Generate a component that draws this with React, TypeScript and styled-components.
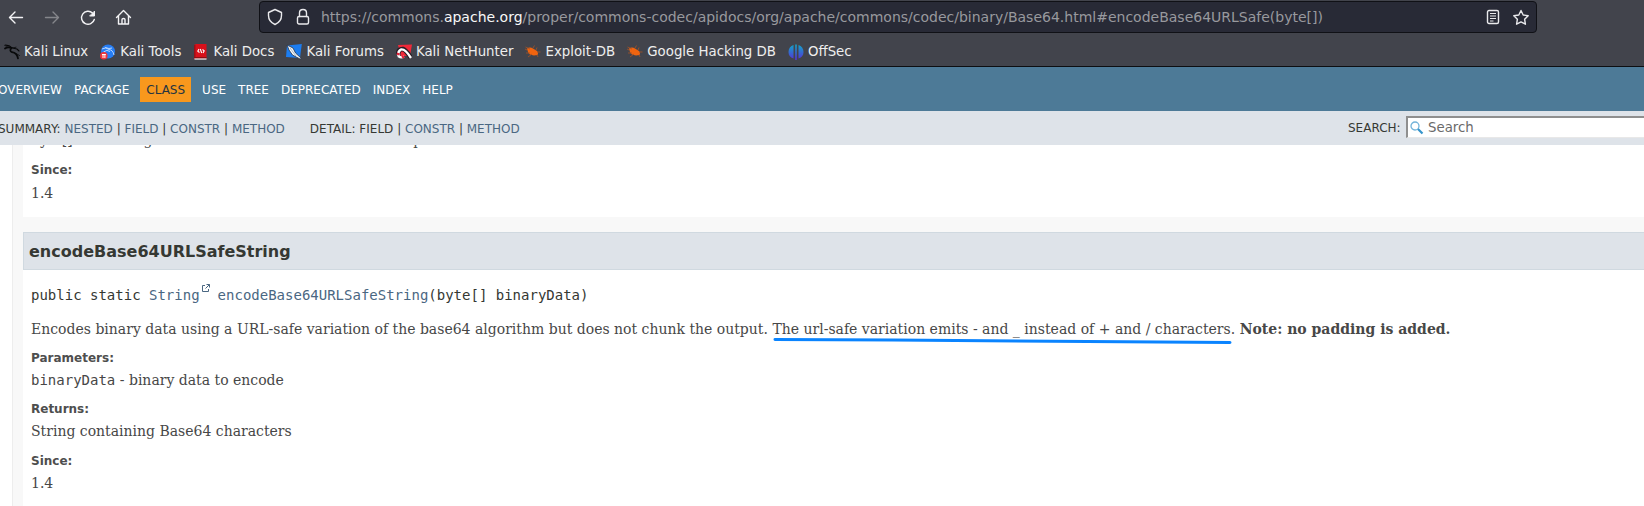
import React from "react";
import styled, { createGlobalStyle } from "styled-components";

const GlobalStyle = createGlobalStyle`
  * { box-sizing: border-box; }
  body {
    margin: 0;
    overflow: hidden;
    background: #ffffff;
    color: #353833;
    font-family: "DejaVu Sans", Arial, Helvetica, sans-serif;
    font-size: 14px;
  }
`;

const Window = styled.div`
  height: 506px;
  overflow: hidden;
  display: flex;
  flex-direction: column;
  white-space: nowrap;
`;

/* Browser chrome */
const Chrome = styled.header`
  flex: none;
  height: 67px;
  background: #42444c;
  border-bottom: 1px solid #0d0e11;
  color: #eeeeee;
`;

const Toolbar = styled.div`
  display: flex;
  align-items: flex-start;
  height: 34px;
  padding: 1px 0 0 6px;
`;

const ToolButtons = styled.div`
  display: flex;
  gap: 16px;
  width: 253px;
  padding-top: 6px;
`;

const ToolButton = styled.span<{ $dim?: boolean }>`
  display: flex;
  width: 20px;
  height: 20px;
  color: ${(p) => (p.$dim ? "#85868b" : "#f3f3f5")};
`;

const UrlBar = styled.div`
  display: flex;
  align-items: center;
  width: 1278px;
  height: 32px;
  padding: 0 6px 0 7px;
  background: #282a36;
  border: 1px solid #101116;
  border-radius: 4px;
`;

const UrlIcon = styled.span<{ $gap?: number }>`
  display: flex;
  margin-right: ${(p) => p.$gap ?? 0}px;
  color: #e9e9ec;
`;

const Url = styled.span`
  flex: 1;
  color: #98999e;
  font-size: 14px;
  line-height: 20px;
`;

const Host = styled.span`
  color: #f8f8f8;
`;

const Bookmarks = styled.nav`
  display: flex;
  gap: 12px;
  padding: 9px 0 0 4px;
`;

const Bookmark = styled.span`
  display: flex;
  align-items: center;
  gap: 4px;
  height: 18px;
  font-size: 13.333px;
  line-height: 18px;
`;

/* Documentation navigation */
const TopNav = styled.nav`
  flex: none;
  height: 44px;
  padding-top: 10px;
  background: #4d7a97;
  color: #ffffff;
  font-size: 12px;
`;

const NavItem = styled.span<{ $active?: boolean }>`
  height: 25px;
  line-height: 27px;
  padding: 0 6px;
  ${(p) => p.$active && "background: #f8981d; color: #253441; margin: 0 5px;"}
`;

const NavList = styled.div`
  display: flex;
  margin-left: -8px;
`;

const SubNav = styled.div`
  flex: none;
  display: flex;
  justify-content: space-between;
  height: 34px;
  background: #dee3e9;
  font-size: 12px;
  line-height: 36px;
`;

const SubLists = styled.div`
  display: flex;
  gap: 25px;
  margin-left: -2px;
`;

const Link = styled.a`
  color: #4a6782;
`;

const SearchArea = styled.div`
  display: flex;
  width: 296px;
  line-height: 34px;
`;

const SearchLabel = styled.label`
  width: 58px;
`;

const SearchBox = styled.div`
  display: flex;
  align-items: center;
  flex: 1;
  gap: 4px;
  height: 22px;
  margin-top: 5px;
  padding-left: 2px;
  background: #ffffff;
  border: 2px solid #8f8f8f;
  border-bottom: 1px solid #e8e8e8;
  border-right: 0;
  color: #6a6a6a;
  font-size: 13.333px;
`;

/* Documentation body */
const Main = styled.main`
  flex: 1;
  min-height: 0;
  display: flex;
  flex-direction: column;
  overflow: hidden;
  margin-left: 12px;
  padding-left: 10px;
  border-left: 1px solid #ededed;
  background: #f8f8f8;
`;

const Section = styled.section<{ $previous?: boolean }>`
  flex: none;
  overflow: hidden;
  background: #ffffff;
  ${(p) => (p.$previous ? "height: 72px; margin-bottom: 15px;" : "height: 290px;")}
`;

const MethodTitle = styled.h3`
  height: 38px;
  margin: 0;
  padding-left: 5px;
  background: #dee3e9;
  border: 1px solid #d0d9e0;
  border-right: 0;
  font-size: 16px;
  line-height: 38px;
`;

const Details = styled.div<{ $lift?: number }>`
  padding-left: 8px;
  margin-top: ${(p) => p.$lift ?? 0}px;
`;

const Signature = styled.div`
  margin-top: 15px;
  height: 20px;
  line-height: 20px;
  font-family: "DejaVu Sans Mono", monospace;
  font-size: 14px;
`;

const ExternalMark = styled.svg`
  margin: -1px 8px 0 2px;
  vertical-align: 8px;
`;

const Block = styled.p`
  margin: 14px 0 0;
  height: 20px;
  line-height: 20px;
  color: #474747;
  font-family: "DejaVu Serif", Georgia, serif;
  font-size: 14px;
`;

const Underlined = styled.span`
  position: relative;
`;

const Stroke = styled.svg`
  position: absolute;
  left: 1px;
  top: 15px;
`;

const Notes = styled.dl`
  margin: 9px 0 0;
`;

const Term = styled.dt<{ $height?: number }>`
  height: ${(p) => p.$height ?? 18}px;
  line-height: 20px;
  color: #4e4e4e;
  font-size: 12px;
  font-weight: bold;
`;

const Desc = styled.dd<{ $after?: number }>`
  margin: 4px 0 ${(p) => p.$after ?? 10.4}px;
  height: 19px;
  line-height: 20px;
  color: #474747;
  font-family: "DejaVu Serif", Georgia, serif;
  font-size: 14px;
`;

const Code = styled.code`
  font-family: "DejaVu Sans Mono", monospace;
  font-size: 14px;
`;

const line = { fill: "none", stroke: "currentColor", strokeWidth: 1.4, strokeLinecap: "round", strokeLinejoin: "round" } as const;

const Back = () => (
  <svg width="20" height="20" {...line}><path d="M16.500 10.500H3.500M9 5L3.500 10.500L9 16" /></svg>
);
const Forward = () => (
  <svg width="20" height="20" {...line}><path d="M3.500 10.500H16.500M11 5L16.500 10.500L11 16" /></svg>
);
const Reload = () => (
  <svg width="20" height="20" {...line}><path d="M14.500 6A6.500 6.500 0 1 0 16.300 12.500" /><path d="M16.500 4.500V9H12Z" fill="currentColor" strokeWidth="1" /></svg>
);
const Home = () => (
  <svg width="20" height="20" {...line}><path d="M2.500 10.500L9.500 3.500L16.500 10.500M4.500 8.800V17H14.500V8.800M8 17V12.500Q8 11.500 9.500 11.500Q11 11.500 11 12.500V17" /></svg>
);
const Shield = () => (
  <svg width="16" height="18" {...line}><path d="M8 1.500L14.500 4.500V7.500C14.500 12 11.500 15 8 16.500C4.500 15 1.500 12 1.500 7.500V4.500Z" /></svg>
);
const Lock = () => (
  <svg width="14" height="18" {...line}><rect x="1.500" y="8.500" width="11" height="7.500" rx="1.500" /><path d="M3.500 8.500V5Q3.500 1.500 7 1.500Q10.500 1.500 10.500 5V8.500" /></svg>
);
const Reader = () => (
  <svg width="14" height="16" {...line}><rect x="1.500" y="1.500" width="11" height="13" rx="1.500" /><path d="M4 4.500H10M4 7H10M4 9.500H10M4 12H7.500" strokeWidth="1.100" strokeLinecap="butt" /></svg>
);
const Star = () => (
  <svg width="18" height="17" {...line}><path d="M9 1.500L11.200 6L16.200 6.700L12.600 10.200L13.400 15.200L9 12.900L4.600 15.200L5.400 10.200L1.800 6.700L6.800 6Z" /></svg>
);

const KaliDragon = () => (
  <svg width="16" height="16" viewBox="0 0 16 16" fill="none" stroke="#08090a" strokeLinecap="round">
    <path d="M.8 1.200Q5 .8 8 3.800Q11 4.500 13 5L15 7" strokeWidth="1.100" />
    <path d="M1 4.500Q4 2.500 7.500 4Q5 7 8 8.200Q13 9 14 14.500" strokeWidth="1.700" />
    <path d="M2 2.800L7 3.500M9 4L12 3.200M12 9.500L15.500 11.500" strokeWidth=".8" />
  </svg>
);
const KaliTools = () => (
  <svg width="16" height="16" viewBox="0 0 16 16">
    <circle cx="8" cy="7.500" r="7" fill="#267df4" />
    <path d="M2 5Q6 2.500 9 5.500Q13 6 14 11M3.500 8Q7 5 10 7.500M5 3.500L9 4.500L12 4" fill="none" stroke="#b6d6ff" strokeWidth="1" />
    <circle cx="3.800" cy="11.800" r="3.800" fill="#ef343b" />
    <path d="M2 10.500H5.800M3 10.500V14M4.900 10.500V14" stroke="#fff" fill="none" />
  </svg>
);
const KaliDocs = () => (
  <svg width="16" height="16" viewBox="0 0 16 16">
    <path d="M1 1L3 0H13.500V15H1Z" fill="#d8101a" />
    <path d="M1 1H2.500V14H1Z" fill="#991017" />
    <path d="M1.500 14.200H13.500V15.700H1.500Z" fill="#dedede" />
    <path d="M1.500 13.700H13.500" stroke="#7b1115" />
    <path d="M6 5L4.800 7.200L6.500 8.500M9.500 5.500L11.200 6.800L10 9M7.300 5L8.700 9" fill="none" stroke="#fff" strokeWidth="1.100" />
  </svg>
);
const KaliForums = () => (
  <svg width="16" height="16" viewBox="0 0 16 16">
    <path d="M1 1.500L15.800 0L14 14L0 13Z" fill="#1c7df1" />
    <path d="M1 1L7 4L9.500 9L15.500 14.500L14 15L6.500 11L3 6Z" fill="#f5f7fa" stroke="#263448" strokeWidth=".8" />
    <path d="M4 4L10 12" stroke="#8b9cac" strokeWidth=".7" />
  </svg>
);
const KaliNetHunter = () => (
  <svg width="16" height="16" viewBox="0 0 16 16">
    <path d="M2 1L16 .5L14 12L5 12Z" fill="#f02939" />
    <path d="M2 10Q2.500 4.500 7 5Q10 6 15 14" fill="none" stroke="#271c24" strokeWidth="4.600" />
    <path d="M3 13Q.8 8 5 5.500Q9 4.500 15 14M3 12.500Q5 14 8 12.500" fill="none" stroke="#fff" strokeWidth="2.400" />
    <path d="M.8 9.500L3.500 10.500M6 12L8 14" stroke="#e31d36" strokeWidth="2.200" />
  </svg>
);
const ExploitBug = () => (
  <svg width="16" height="16" viewBox="0 0 16 16">
    <path d="M2 4.500Q5 2.500 8 4.500L12 7Q14 9 12.500 11L9 11.500Q4 11 3 8Z" fill="#f0640f" />
    <path d="M.5 3L5 5M8 4L9.500 1.500M11 6L12 3.500M1 9H5M3 13L7 10M12 11L13 13M12 8H15.500M2 6L0 5" fill="none" stroke="#a85324" strokeWidth=".8" />
  </svg>
);
const OffSec = () => (
  <svg width="16" height="16" viewBox="0 0 16 16">
    <defs><linearGradient id="offsec" x1="0" y1="0" x2="0" y2="1"><stop stopColor="#12a5c8" /><stop offset="1" stopColor="#5630d8" /></linearGradient></defs>
    <path d="M5.500 1V14.500C2 13.500 .5 11 .5 8C.5 4.500 2.500 2 5.500 1ZM7.200 .5H8.800V16H7.200ZM10.500 1C13.500 2 15.500 4.500 15.500 8C15.500 11 14 13.500 10.500 14.500Z" fill="url(#offsec)" />
  </svg>
);
const Magnifier = () => (
  <svg width="14" height="14" viewBox="0 0 14 14" fill="none">
    <circle cx="5" cy="5" r="4" stroke="#72b3d9" strokeWidth="1.300" />
    <path d="M8 8L12.500 12.500" stroke="#3594cb" strokeWidth="2.200" />
  </svg>
);

const bookmarks: [string, React.ReactNode][] = [
  ["Kali Linux", <KaliDragon />],
  ["Kali Tools", <KaliTools />],
  ["Kali Docs", <KaliDocs />],
  ["Kali Forums", <KaliForums />],
  ["Kali NetHunter", <KaliNetHunter />],
  ["Exploit-DB", <ExploitBug />],
  ["Google Hacking DB", <ExploitBug />],
  ["OffSec", <OffSec />],
];

const sections = ["OVERVIEW", "PACKAGE", "CLASS", "USE", "TREE", "DEPRECATED", "INDEX", "HELP"];

export default function App() {
  return (
    <Window>
      <GlobalStyle />
      <Chrome>
        <Toolbar>
          <ToolButtons>
            <ToolButton><Back /></ToolButton>
            <ToolButton $dim><Forward /></ToolButton>
            <ToolButton><Reload /></ToolButton>
            <ToolButton><Home /></ToolButton>
          </ToolButtons>
          <UrlBar>
            <UrlIcon $gap={13}><Shield /></UrlIcon>
            <UrlIcon $gap={11}><Lock /></UrlIcon>
            <Url>
              https://commons.<Host>apache.org</Host>/proper/commons-codec/apidocs/org/apache/commons/codec/binary/Base64.html#encodeBase64URLSafe(byte[])
            </Url>
            <UrlIcon $gap={12}><Reader /></UrlIcon>
            <UrlIcon><Star /></UrlIcon>
          </UrlBar>
        </Toolbar>
        <Bookmarks>
          {bookmarks.map(([name, icon]) => (
            <Bookmark key={name}>{icon}{name}</Bookmark>
          ))}
        </Bookmarks>
      </Chrome>
      <TopNav>
        <NavList>
          {sections.map((name) => <NavItem key={name} $active={name === "CLASS"}>{name}</NavItem>)}
        </NavList>
      </TopNav>
      <SubNav>
        <SubLists>
          <span>SUMMARY: <Link>NESTED</Link> | <Link>FIELD</Link> | <Link>CONSTR</Link> | <Link>METHOD</Link></span>
          <span>DETAIL: FIELD | <Link>CONSTR</Link> | <Link>METHOD</Link></span>
        </SubLists>
        <SearchArea>
          <SearchLabel>SEARCH:</SearchLabel>
          <SearchBox><Magnifier />Search</SearchBox>
        </SearchArea>
      </SubNav>
      <Main>
        <Section $previous>
          <Details $lift={-19}>
            <Desc as="div" $after={11}>byte[] containing Base64 characters in their UTF-8 representation.</Desc>
            <Notes>
              <Term $height={19.4}>Since:</Term>
              <Desc>1.4</Desc>
            </Notes>
          </Details>
        </Section>
        <Section>
          <MethodTitle>encodeBase64URLSafeString</MethodTitle>
          <Details>
            <Signature>
              public static <Link>String</Link>
              <Link>
                <ExternalMark width="8" height="8" viewBox="0 0 8 8" fill="none" stroke="currentColor">
                  <path d="M3 1.500H.5V7.500H6.500V5M4.500 .5H7.500V3.500M7.500 .5L3.500 4.500" />
                </ExternalMark>
                encodeBase64URLSafeString
              </Link>
              (byte[] binaryData)
            </Signature>
            <Block>
              Encodes binary data using a URL-safe variation of the base64 algorithm but does not chunk the output.{" "}
              <Underlined>
                The url-safe variation emits - and _ instead of + and / characters
                <Stroke width="460" height="10" fill="none">
                  <path d="M2 3.500L120 4L457 6.500" stroke="#0a84ff" strokeWidth="3" strokeLinecap="round" />
                </Stroke>
              </Underlined>
              . <b>Note: no padding is added.</b>
            </Block>
            <Notes>
              <Term>Parameters:</Term>
              <Desc><Code>binaryData</Code> - binary data to encode</Desc>
              <Term>Returns:</Term>
              <Desc>String containing Base64 characters</Desc>
              <Term>Since:</Term>
              <Desc>1.4</Desc>
            </Notes>
          </Details>
        </Section>
      </Main>
    </Window>
  );
}
